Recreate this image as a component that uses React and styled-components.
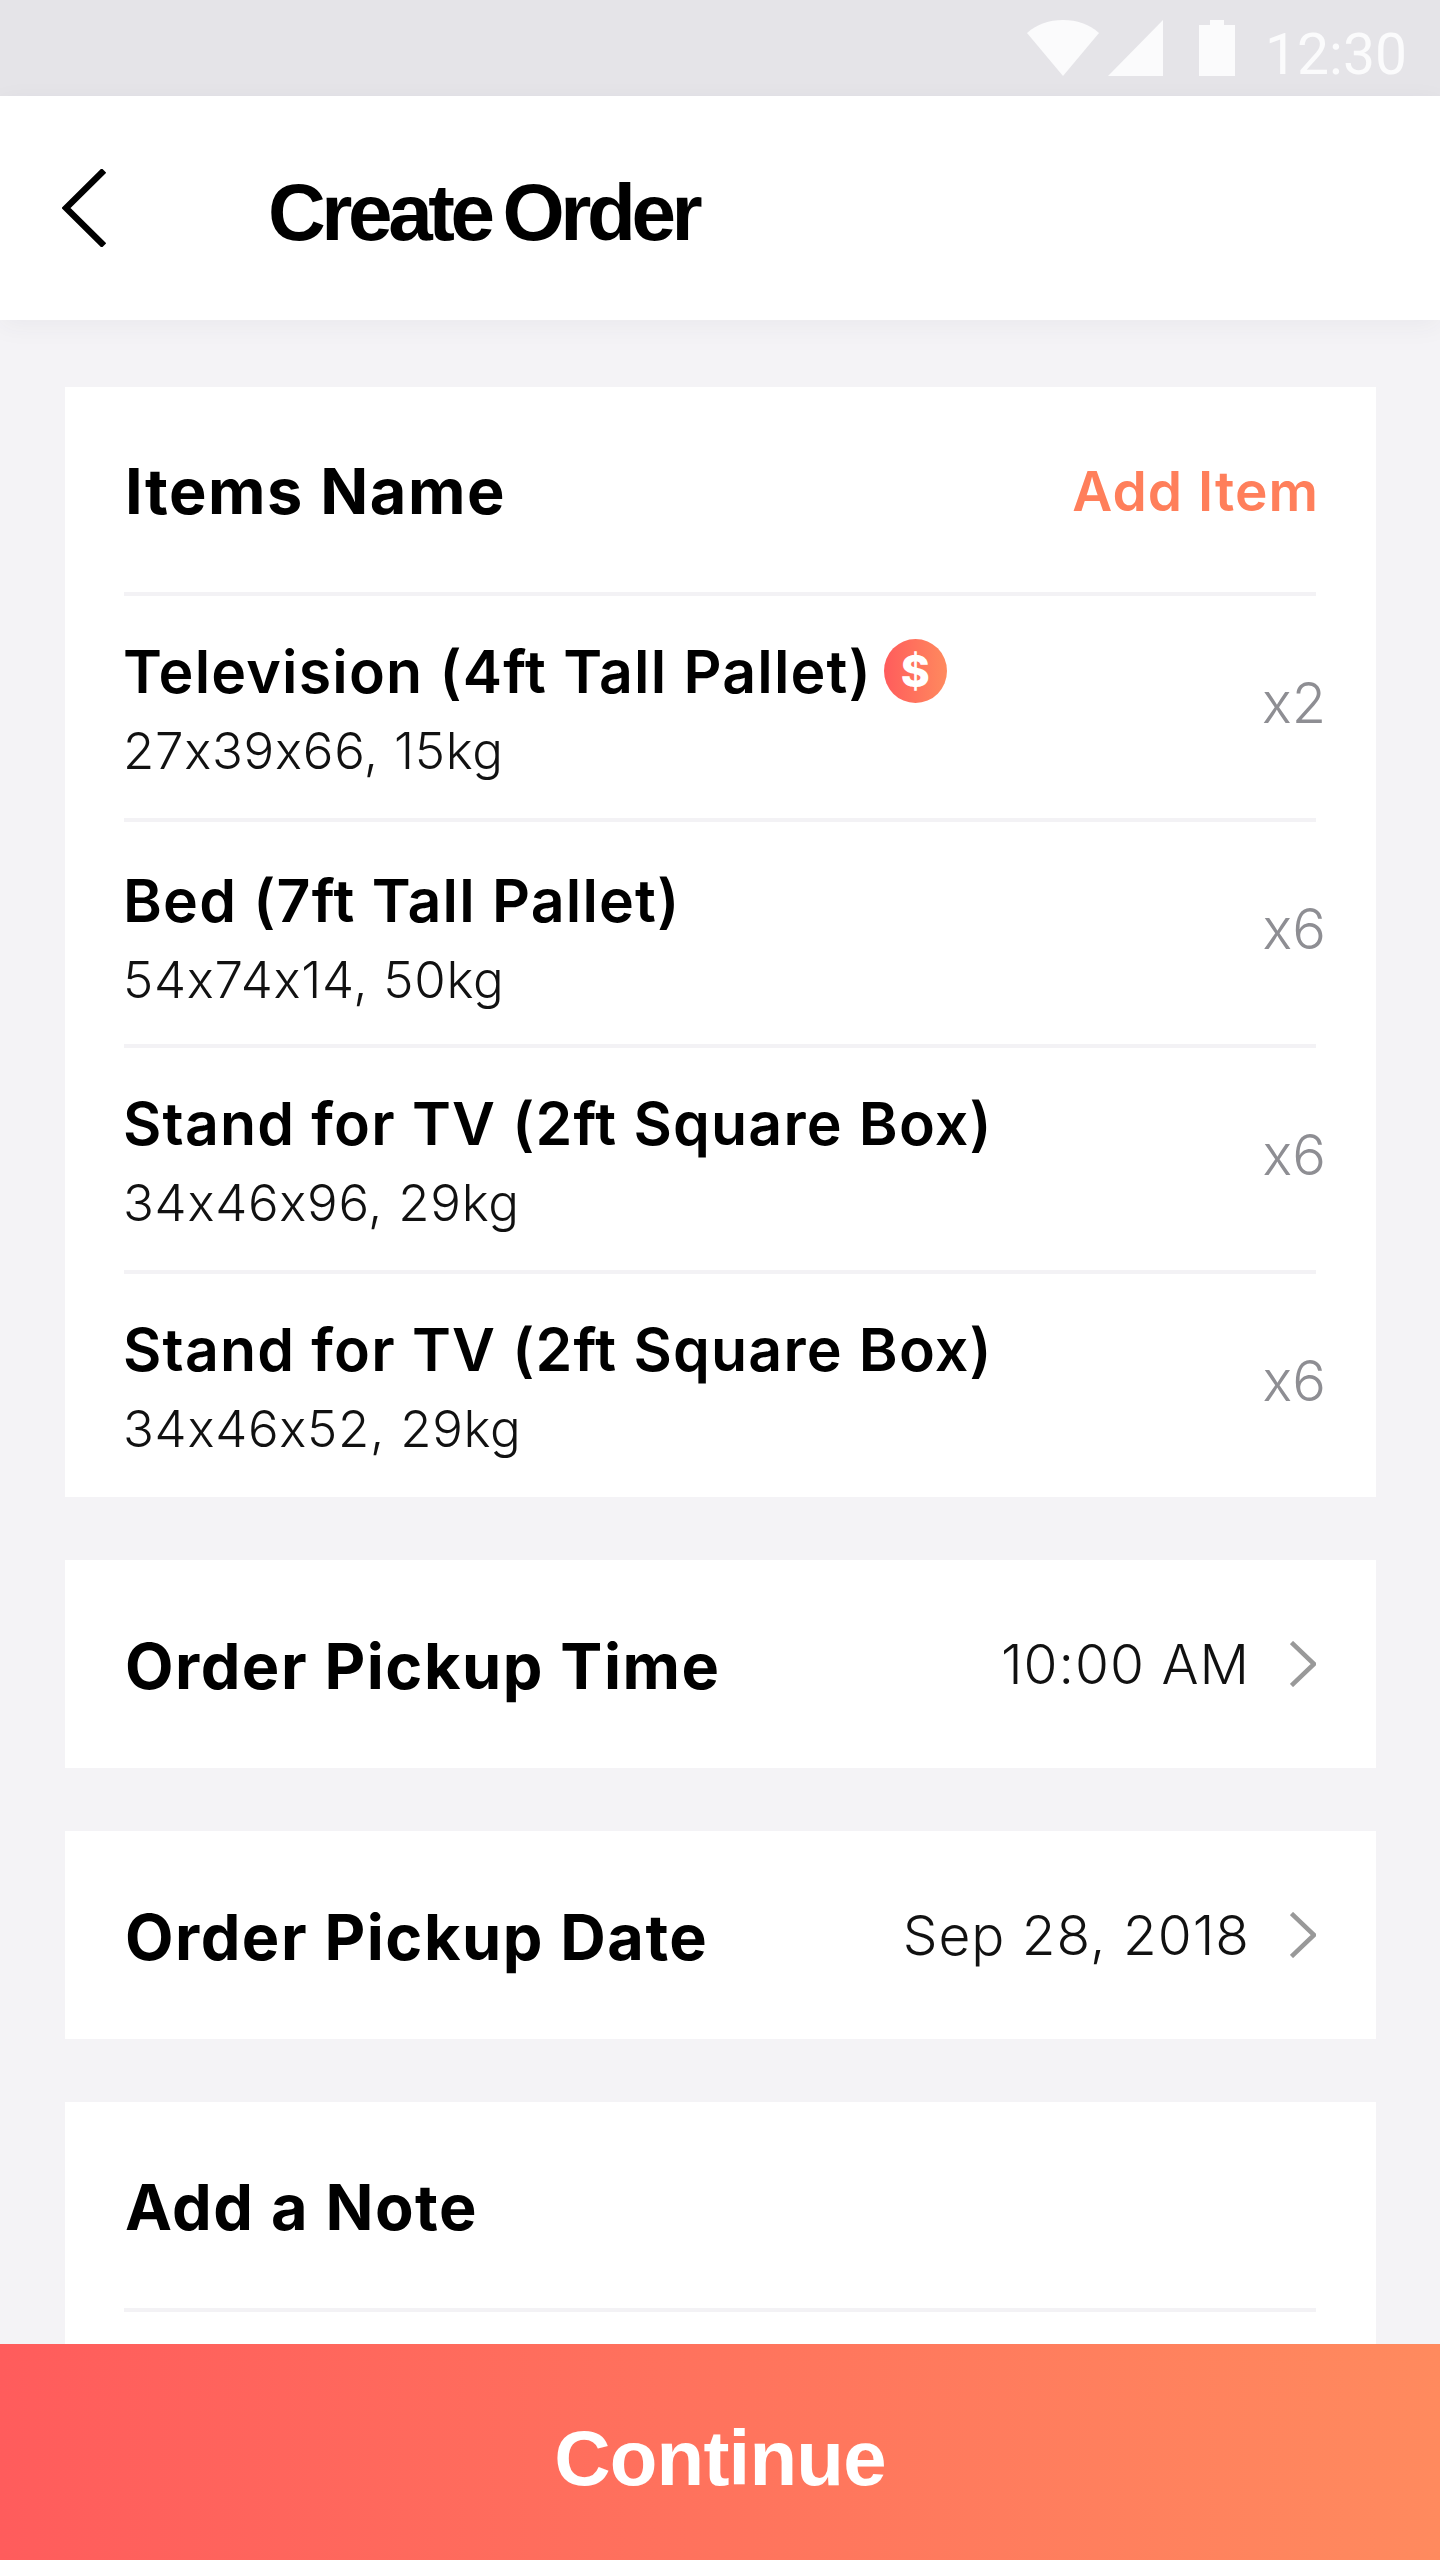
import React from "react";
import styled, { createGlobalStyle } from "styled-components";

const GlobalStyle = createGlobalStyle`
  html, body {
    margin: 0;
    padding: 0;
    background: #f4f3f6;
    font-family: "Inter", "Liberation Sans", sans-serif;
  }
  * { box-sizing: border-box; }
`;

// LAYOUT
const Page = styled.div`
  position: relative;
  width: 1440px;
  height: 2560px;
  overflow: hidden;
  background: #f4f3f6;
`;

const StatusBar = styled.div`
  height: 96px;
  background: #e5e4e8;
  display: flex;
  align-items: flex-start;
  justify-content: flex-end;
  padding: 20px 33px 0 0;
`;

const StatusTime = styled.span`
  font-family: "Roboto", sans-serif;
  font-size: 57px;
  line-height: 70px;
  font-weight: 400;
  color: #fbfbfc;
  margin-left: 30px;
`;

const Header = styled.header`
  height: 224px;
  background: #fff;
  display: flex;
  align-items: center;
  padding-left: 62px;
  box-shadow: 0 6px 24px rgba(60, 50, 80, 0.05);
  position: relative;
`;

const Title = styled.h1`
  margin: 0 0 0 162px;
  padding-top: 9px;
  font-family: "Liberation Sans", sans-serif;
  font-size: 80px;
  font-weight: 700;
  letter-spacing: -4.4px;
  word-spacing: -6px;
  color: #000;
`;

const Content = styled.main`
  display: flex;
  flex-direction: column;
  gap: 63px;
  padding: 67px 64px 0 65px;
`;

const Card = styled.section`
  background: #fff;
  padding: 0 60px 0 59px;
`;

const CardHead = styled.div`
  height: 209px;
  display: flex;
  align-items: center;
  justify-content: space-between;
  border-bottom: 4px solid #f3f2f5;
`;

const Heading = styled.h2`
  margin: 0 0 0 1px;
  padding-top: 3px;
  font-size: 63px;
  font-weight: 700;
  letter-spacing: 1.5px;
  color: #000;
`;

const AddLink = styled.a`
  margin-right: -3px;
  padding-top: 3px;
  font-size: 55px;
  font-weight: 600;
  letter-spacing: 1px;
  color: #ff7f5b;
`;

const Row = styled.div`
  height: ${(props) => (props.$last ? "223px" : "226px")};
  display: flex;
  align-items: flex-start;
  justify-content: space-between;
  padding-top: ${(props) => props.$top}px;
  border-bottom: ${(props) => (props.$last ? "none" : "4px solid #f3f2f5")};
`;

const ItemInfo = styled.div`
  margin-left: -1px;
`;

const ItemTitle = styled.div`
  display: flex;
  align-items: center;
  gap: 12px;
  height: 80px;
  font-size: 59px;
  font-weight: 600;
  letter-spacing: 1.2px;
  color: #000;
`;

const ItemSize = styled.div`
  font-size: 51px;
  line-height: 80px;
  font-weight: 300;
  letter-spacing: 0.7px;
  color: #111;
`;

const Qty = styled.span`
  align-self: center;
  margin: ${(props) => -9 - props.$top}px -10px 0 0;
  font-size: 56px;
  font-weight: 300;
  color: #8e8e93;
`;

const Badge = styled.span`
  width: 63px;
  height: 64px;
  border-radius: 50%;
  background: linear-gradient(90deg, #ff5c5c, #ff8a5e);
  color: #fff;
  font-size: 44px;
  font-weight: 800;
  letter-spacing: 0;
  display: flex;
  align-items: center;
  justify-content: center;
`;

const PickerCard = styled(Card)`
  height: 208px;
  display: flex;
  align-items: center;
  justify-content: space-between;
`;

const PickerValue = styled.div`
  display: flex;
  align-items: center;
  gap: 40px;
  font-size: 55px;
  font-weight: 300;
  letter-spacing: 1px;
  color: #111;
`;

const NoteCard = styled(Card)`
  height: 400px;
`;

const NoteHead = styled(CardHead)`
  height: 210px;
`;

const Footer = styled.button`
  position: absolute;
  left: 0;
  right: 0;
  bottom: 0;
  height: 216px;
  border: 0;
  padding: 12px 0 0;
  background: linear-gradient(90deg, #ff5c5c, #ff8a5e);
  color: #fff;
  font-family: "Liberation Sans", sans-serif;
  font-size: 78px;
  font-weight: 700;
  letter-spacing: -0.8px;
`;

// ICONS
const BackIcon = () => (
  <svg width="44" height="78" viewBox="0 0 44 78" fill="none">
    <path d="M42 1.5 4 39l38 37.5" stroke="#000" strokeWidth="6.5" />
  </svg>
);

const Chevron = () => (
  <svg width="26" height="46" viewBox="0 0 26 46" fill="none">
    <path d="M1.5 1.5 24 23 1.5 44.5" stroke="#999" strokeWidth="4.5" />
  </svg>
);

const StatusIcons = () => (
  <>
    <svg width="72" height="56" viewBox="0 0 72 56" fill="#fbfbfc">
      <path d="M36 56 0 13C10 4 22 0 36 0s26 4 36 13z" />
    </svg>
    <svg width="55" height="56" viewBox="0 0 55 56" fill="#fbfbfc" style={{ marginLeft: 9 }}>
      <path d="M55 0v56H0z" />
    </svg>
    <svg width="36" height="56" viewBox="0 0 36 56" fill="#fbfbfc" style={{ marginLeft: 36 }}>
      <path d="M11 0h14v5h11v51H0V5h11z" />
    </svg>
  </>
);

// DATA
const items = [
  { name: "Television (4ft Tall Pallet)", size: "27x39x66, 15kg", qty: "x2", top: 35, paid: true },
  { name: "Bed (7ft Tall Pallet)", size: "54x74x14, 50kg", qty: "x6", top: 38 },
  { name: "Stand for TV (2ft Square Box)", size: "34x46x96, 29kg", qty: "x6", top: 35 },
  { name: "Stand for TV (2ft Square Box)", size: "34x46x52, 29kg", qty: "x6", top: 35 },
];

// MAIN COMPONENT
export default function App() {
  return (
    <Page>
      <GlobalStyle />
      <StatusBar>
        <StatusIcons />
        <StatusTime>12:30</StatusTime>
      </StatusBar>
      <Header>
        <BackIcon />
        <Title>Create Order</Title>
      </Header>
      <Content>
        <Card>
          <CardHead>
            <Heading>Items Name</Heading>
            <AddLink>Add Item</AddLink>
          </CardHead>
          {items.map((item, i) => (
            <Row key={item.size} $top={item.top} $last={i === items.length - 1}>
              <ItemInfo>
                <ItemTitle>
                  {item.name}
                  {item.paid && <Badge>$</Badge>}
                </ItemTitle>
                <ItemSize>{item.size}</ItemSize>
              </ItemInfo>
              <Qty $top={item.top}>{item.qty}</Qty>
            </Row>
          ))}
        </Card>
        <PickerCard>
          <Heading>Order Pickup Time</Heading>
          <PickerValue>
            10:00 AM
            <Chevron />
          </PickerValue>
        </PickerCard>
        <PickerCard>
          <Heading>Order Pickup Date</Heading>
          <PickerValue>
            Sep 28, 2018
            <Chevron />
          </PickerValue>
        </PickerCard>
        <NoteCard>
          <NoteHead>
            <Heading>Add a Note</Heading>
          </NoteHead>
        </NoteCard>
      </Content>
      <Footer>Continue</Footer>
    </Page>
  );
}
